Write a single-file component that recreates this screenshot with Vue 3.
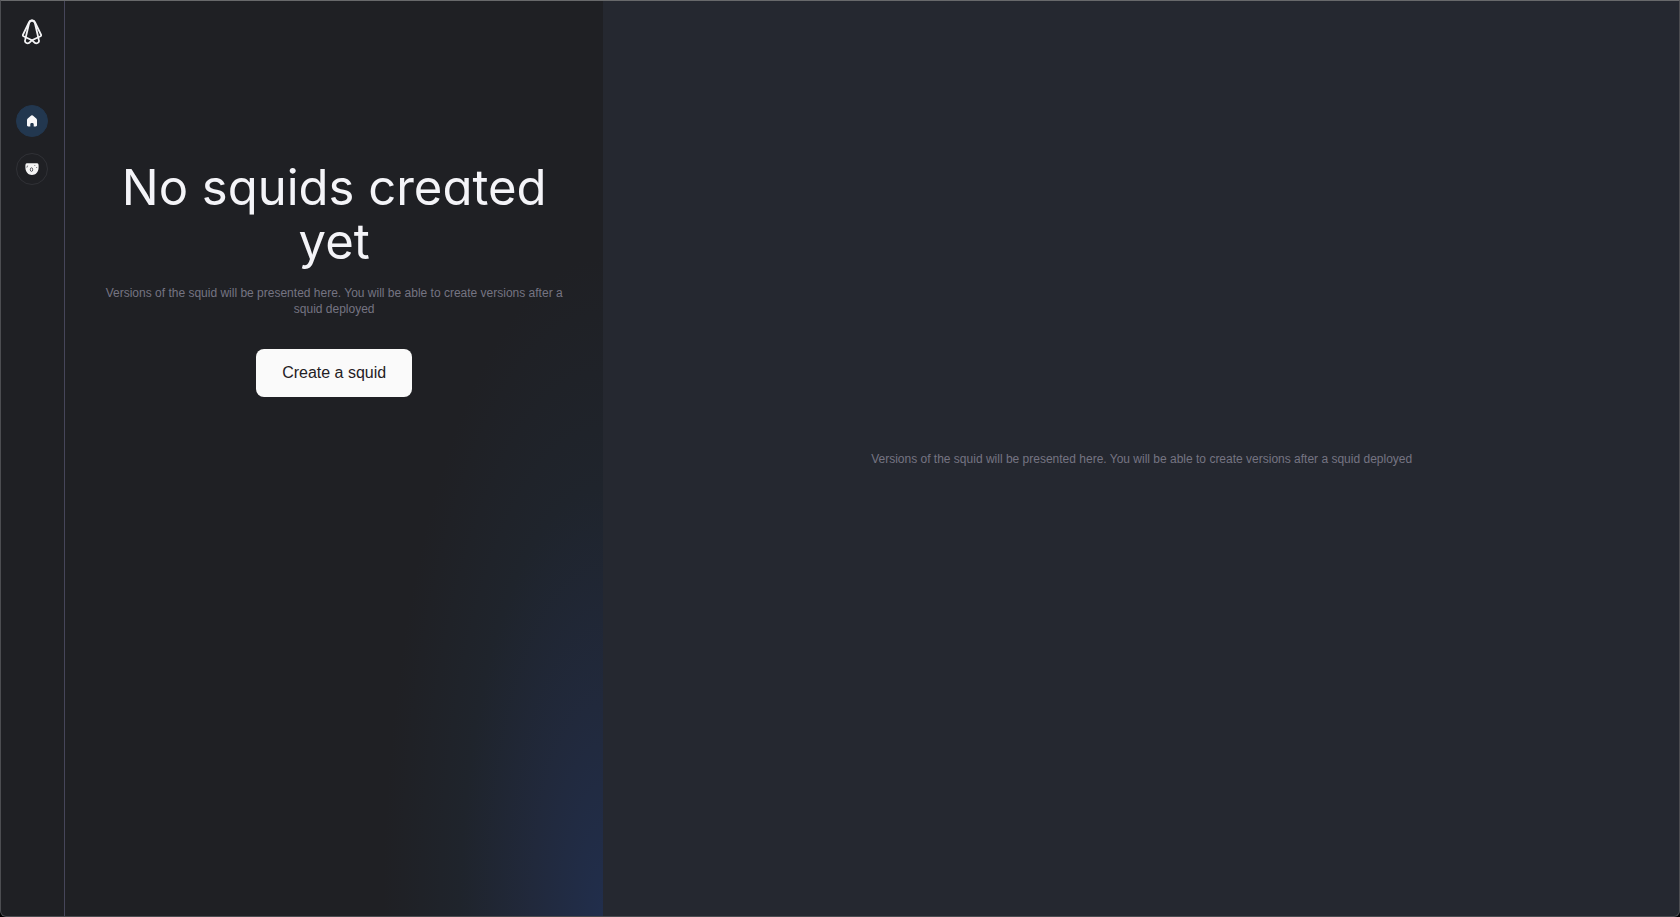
<script setup>
const hint = 'Versions of the squid will be presented here. You will be able to create versions after a squid deployed'
</script>

<template>
  <div class="window">
    <nav class="sidebar" aria-label="Main">
      <a class="logo" href="#" aria-label="Subsquid">
        <svg width="20" height="26" viewBox="0 0 20 26" fill="none" stroke="#f4f4f6" stroke-width="1.8" stroke-linejoin="round" stroke-linecap="round">
          <path d="M10 1.500C8.500 1.500 7.500 2.400 6.700 4L1 15.700C.7 16.400.9 16.900 1.500 17.200L10 21.200C11.500 22 12.200 24.300 14.200 24.300C16.300 24.300 17.500 22.800 16.800 20.700L12.900 4C12.500 2.400 11.500 1.500 10 1.500Z" />
          <path d="M10 1.500C11.500 1.500 12.500 2.400 13.300 4L19 15.700C19.300 16.400 19.100 16.900 18.500 17.200L10 21.200C8.500 22 7.800 24.300 5.800 24.300C3.700 24.300 2.500 22.800 3.200 20.700L7.100 4C7.500 2.400 8.500 1.500 10 1.500Z" />
        </svg>
      </a>
      <a class="item active" href="#" aria-label="Home">
        <svg width="12" height="12" viewBox="0 0 12 12" fill="#f8f8fa">
          <path d="M5.200.6a1.300 1.300 0 0 1 1.600 0l3.500 3c.4.400.7.900.7 1.500v5.200c0 .7-.5 1.200-1.200 1.200H7.700V9.300c0-.8-.7-1.300-1.700-1.300s-1.700.5-1.700 1.300v2.200H2.200C1.500 11.500 1 11 1 10.300V5.100c0-.6.3-1.100.7-1.500z" />
        </svg>
      </a>
      <a class="item" href="#" aria-label="Squids">
        <svg width="14" height="12" viewBox="0 0 14 12">
          <path fill="#f5f5f5" d="M1 .6C2.400 0 4 .3 5 .3h4c1 0 2.600-.3 4 .3.700.8.700 2.600.600 4.200C13.400 9.500 10.600 12 7 12S.6 9.500.4 4.800C.3 3.200.3 1.400 1 .6z" />
          <path fill="none" stroke="#44454b" stroke-width=".8" d="M1.800 4.600L2.600 2.600M9.600 2.200l.5.800M11.500 4l.3.900" />
          <ellipse cx="6.500" cy="6.600" rx="1.200" ry="1.800" fill="#f5f5f5" stroke="#44454b" stroke-width=".9" />
        </svg>
      </a>
    </nav>

    <main class="intro">
      <h1>No squids created yet</h1>
      <p class="hint">{{ hint }}</p>
      <button type="button">Create a squid</button>
    </main>

    <section class="versions" aria-label="Versions">
      <p class="hint">{{ hint }}</p>
    </section>
  </div>
</template>

<style>
body {
  margin: 0;
  background: #000;
}
</style>

<style scoped>
.window {
  position: relative;
  display: grid;
  grid-template-columns: auto minmax(0, 1fr) minmax(0, 2fr);
  min-height: 100vh;
  border-radius: 0 0 6px 6px;
  overflow: hidden;
  background: #1f2024;
  font-family: "Liberation Sans", Arial, sans-serif;
}

/* Window frame, drawn over the panels */
.window::after {
  position: absolute;
  inset: 0;
  border: 1px solid #4c4d51;
  border-top-color: #68696b;
  border-radius: 0 0 6px 6px;
  content: "";
  pointer-events: none;
}

.sidebar {
  display: flex;
  flex-direction: column;
  align-items: center;
  gap: 16px;
  width: 64px;
  padding-top: 19px;
  border-right: 1px solid #46465a;
}

.logo {
  display: flex;
  margin-bottom: 44px;
}

.item {
  box-sizing: border-box;
  display: flex;
  align-items: center;
  justify-content: center;
  width: 32px;
  height: 32px;
  border: 1px solid #303136;
  border-radius: 50%;
}

.item.active {
  border-color: #22374f;
  background: #22374f;
}

.intro {
  display: flex;
  flex-direction: column;
  align-items: center;
  padding: 161px 32px 32px;
  background: radial-gradient(ellipse 220px 660px at 100% 100%, #212e4c 0%, #21293c 32%, #1f242c 65%, #1f2024 100%);
  text-align: center;
}

h1 {
  margin: 0 0 16px;
  color: #f4f4f8;
  font-family: Inter, "Liberation Sans", sans-serif;
  font-size: 49px;
  font-weight: 400;
  line-height: 54px;
  font-feature-settings: "cv11";
}

.hint {
  margin: 0;
  color: #757482;
  font-size: 12px;
  line-height: 16px;
}

button {
  height: 48px;
  margin-top: 32px;
  padding: 0 26px;
  border: 0;
  border-radius: 8px;
  background: #fafafa;
  color: #1f2024;
  font-family: inherit;
  font-size: 16px;
  line-height: 24px;
}

.versions {
  display: flex;
  align-items: center;
  justify-content: center;
  background: #252830;
}
</style>
